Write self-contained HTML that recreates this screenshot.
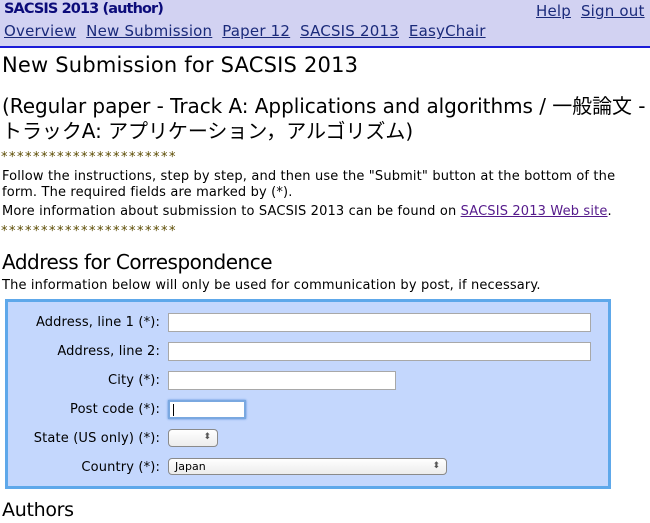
<!DOCTYPE html>
<html><head><meta charset="utf-8"><style>
body{margin:0;width:650px;height:523px;overflow:hidden;background:#fff;font-family:"DejaVu Sans","Liberation Sans","Noto Sans CJK JP",sans-serif;color:#000;position:relative}
.a{position:absolute;white-space:nowrap}
#hdr{position:absolute;left:0;top:0;width:650px;height:46px;background:#d2d2f2;border-bottom:2px solid #1b1bd8}
a{color:#1a2a7a;text-decoration:underline}
.nav{font-size:15px;letter-spacing:0.2px}
.p{font-size:13px;letter-spacing:0.15px}
.lab{position:absolute;right:490px;font-size:13px;white-space:nowrap;letter-spacing:0.15px}
.in{position:absolute;background:#fff;border:1px solid #a8a8a8;box-sizing:border-box}
.sel{position:absolute;background:linear-gradient(#fff,#ececec);border:1px solid #8a8a8a;border-radius:4px;box-sizing:border-box;font-size:11px;padding-left:6px;line-height:15px}
.sel:after{content:"⬍";position:absolute;right:6px;top:0;font-size:9px;color:#555}
.st{font-size:13px;letter-spacing:1.5px;color:#5a4a00}
</style></head><body>
<div id="hdr"></div>
<div class="a" style="left:4px;top:1px;font-size:14.5px;font-weight:bold;color:#0b0b7a;letter-spacing:-0.9px">SACSIS 2013 (author)</div>
<div class="a nav" style="left:4px;top:22px"><a>Overview</a>&nbsp; <a>New Submission</a>&nbsp; <a>Paper 12</a>&nbsp; <a>SACSIS 2013</a>&nbsp; <a>EasyChair</a></div>
<div class="a nav" style="left:536px;top:2px"><a>Help</a>&nbsp; <a>Sign out</a></div>
<div class="a" style="left:2px;top:53px;font-size:21px;letter-spacing:0.2px">New Submission for SACSIS 2013</div>
<div class="a" style="left:2px;top:90px;font-size:20px;letter-spacing:-0.05px">(Regular paper - Track A: Applications and algorithms / 一般論文 -</div>
<div class="a" style="left:2px;top:115px;font-size:20px;letter-spacing:-0.05px">トラックA: アプリケーション，アルゴリズム)</div>
<div class="a st" style="left:1px;top:150px">**********************</div>
<div class="a p" style="left:2px;top:169px">Follow the instructions, step by step, and then use the "Submit" button at the bottom of the</div>
<div class="a p" style="left:2px;top:185px">form. The required fields are marked by (*).</div>
<div class="a p" style="left:2px;top:204px">More information about submission to SACSIS 2013 can be found on <a style="color:#551a8b">SACSIS 2013 Web site</a>.</div>
<div class="a st" style="left:1px;top:224px">**********************</div>
<div class="a" style="left:2px;top:250px;font-size:20px;letter-spacing:-0.5px">Address for Correspondence</div>
<div class="a p" style="left:2px;top:278px">The information below will only be used for communication by post, if necessary.</div>
<div style="position:absolute;left:5px;top:299px;width:606px;height:190px;box-sizing:border-box;background:#c4d7fd;border:3px solid #5ea8ea"></div>
<div class="lab" style="top:315px">Address, line 1 (*):</div>
<div class="in" style="left:168px;top:313px;width:423px;height:19px"></div>
<div class="lab" style="top:344px">Address, line 2:</div>
<div class="in" style="left:168px;top:342px;width:423px;height:19px"></div>
<div class="lab" style="top:373px">City (*):</div>
<div class="in" style="left:168px;top:371px;width:228px;height:19px"></div>
<div class="lab" style="top:402px">Post code (*):</div>
<div class="in" style="left:168px;top:400px;width:78px;height:19px;border:2px solid #7aa8e0;box-shadow:0 0 2px #4a88d8"><div style="position:absolute;left:3px;top:2px;width:1px;height:12px;background:#000"></div></div>
<div class="lab" style="top:431px">State (US only) (*):</div>
<div class="sel" style="left:168px;top:429px;width:50px;height:18px"></div>
<div class="lab" style="top:460px">Country (*):</div>
<div class="sel" style="left:168px;top:458px;width:279px;height:17px">Japan</div>
<div class="a" style="left:2px;top:499px;font-size:19px;letter-spacing:-0.3px">Authors</div>
</body></html>
